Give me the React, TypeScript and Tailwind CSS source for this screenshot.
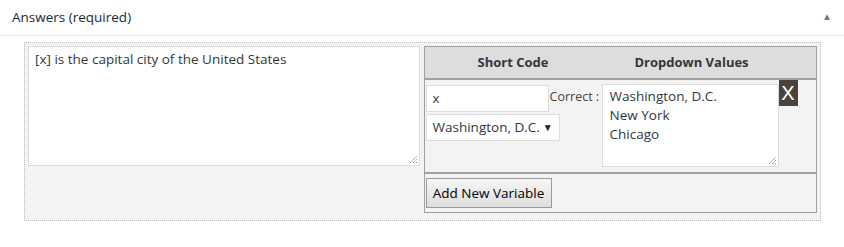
import React from "react";

export default function App() {
  const font = { fontFamily: '"Open Sans", "Noto Sans", sans-serif' };
  return (
    <div className="w-[844px] h-[247px] bg-white text-[#32373c]" style={font}>
      <div className="h-[36px] border-b border-[#eeeeee] flex items-center justify-between pl-[12px] pr-[12px]">
        <span className="text-[13.5px] text-[#23282d]">Answers (required)</span>
        <span className="text-[10px] text-[#72777c] mt-[-3px]">▲</span>
      </div>
      <div className="pl-[24px] pt-[6px]">
        <div className="w-[797px] h-[179px] border border-dotted border-[#bbbbbb] bg-[#f3f3f3] p-[3px] flex gap-[4px]">
          <div className="w-[393px] h-[120px] bg-white border border-[#dddddd] px-[6px] py-[2px] text-[13.5px] text-[#32373c] relative">
            [x] is the capital city of the United States
            <svg className="absolute right-[1px] bottom-[1px]" width="9" height="9" viewBox="0 0 9 9">
              <path d="M1 8 L8 1 M4 8 L8 4 M7 8 L8 7" stroke="#666" strokeWidth="1" strokeDasharray="1 1" />
            </svg>
          </div>
          <div className="w-[395px] h-[167px] border border-[#a0a0a0] flex flex-col">
            <div className="h-[33px] bg-[#dddddd] border-b-2 border-[#a0a0a0] flex items-center text-[13px] font-bold text-[#32373c]">
              <div className="w-[177px] text-center">Short Code</div>
              <div className="w-[180px] text-center">Dropdown Values</div>
            </div>
            <div className="h-[94px] border-b-2 border-[#a0a0a0] flex pl-[1px] pt-[3px]">
              <div className="w-[176px] shrink-0 flex flex-col gap-[2px] pt-[2px]">
                <div className="flex items-center">
                  <div className="w-[123px] shrink-0 h-[27px] bg-white border border-[#dddddd] flex items-center px-[6px] text-[13.5px]">x</div>
                  <span className="ml-[1px] whitespace-nowrap text-[12.5px] text-[#444] mt-[-2px]">Correct :</span>
                </div>
                <div className="w-[134px] h-[27px] bg-white border border-[#dddddd] flex items-center justify-between pl-[6px] pr-[6px] text-[13.5px]">
                  <span>Washington, D.C.</span>
                  <span className="text-[10px] text-[#222]">▼</span>
                </div>
              </div>
              <div className="w-[177px] shrink-0 h-[83px] mt-[1px] bg-white border border-[#dddddd] px-[7px] pt-[2px] text-[13.5px] leading-[19px] relative">
                <div>Washington, D.C.</div>
                <div>New York</div>
                <div>Chicago</div>
                <svg className="absolute right-[1px] bottom-[1px]" width="9" height="9" viewBox="0 0 9 9">
                  <path d="M1 8 L8 1 M4 8 L8 4 M7 8 L8 7" stroke="#666" strokeWidth="1" strokeDasharray="1 1" />
                </svg>
              </div>
              <div className="w-[19px] shrink-0 h-[26px] mt-[-3px] bg-[#4a433b] text-white text-[20px] leading-[26px] text-center" style={{ fontFamily: '"Liberation Sans", sans-serif' }}>X</div>
            </div>
            <div className="flex-1 pl-[1px] pt-[4px]">
              <div className="w-[126px] h-[30px] border border-[#999999] bg-gradient-to-b from-[#f6f6f6] to-[#dedede] flex items-center justify-center text-[13.5px] text-black">Add New Variable</div>
            </div>
          </div>
        </div>
      </div>
    </div>
  );
}
